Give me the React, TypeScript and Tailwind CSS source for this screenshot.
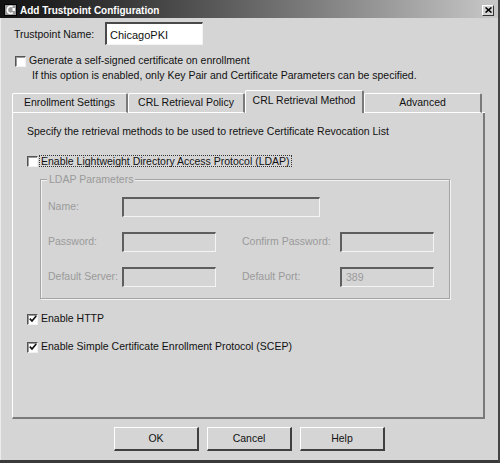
import React from "react";

function Check({ checked }: { checked?: boolean }) {
  return (
    <span className="flex h-[11px] w-[11px] shrink-0 items-center justify-center border border-t-[#555] border-l-[#555] border-r-[#f2f2f2] border-b-[#f2f2f2] bg-white shadow-[inset_1px_1px_0_#9a9a9a]">
      {checked && (
        <svg width="8" height="8" viewBox="0 0 8 8">
          <path d="M0.8 3.6 L3 6 L7.2 1" stroke="#111" strokeWidth="1.7" fill="none" />
        </svg>
      )}
    </span>
  );
}

function Field({ w, value }: { w: string; value?: string }) {
  return (
    <div
      className={`${w} flex h-[20px] items-center border-t-2 border-l-2 border-b border-r border-t-[#5e5e5e] border-l-[#5e5e5e] border-b-[#f4f4f4] border-r-[#f4f4f4] bg-[#d5d5d5] px-[4px] text-[10.5px] text-[#9a9a9a]`}
    >
      {value}
    </div>
  );
}

function Tab({ label, w, active }: { label: string; w: string; active?: boolean }) {
  return (
    <div
      className={`${w} flex items-center justify-center rounded-t-[2px] border-t border-l border-r-2 border-t-white border-l-white border-r-[#7a7a7a] ${
        active ? "h-[23px] pb-[3px]" : "h-[20px] border-b border-b-white"
      }`}
    >
      {label}
    </div>
  );
}

function Button({ label }: { label: string }) {
  return (
    <div className="flex h-[24px] w-[85px] items-center justify-center border border-t-white border-l-white border-r-2 border-b-2 border-r-[#3f3f3f] border-b-[#3f3f3f] text-[10.5px]">
      {label}
    </div>
  );
}

export default function App() {
  return (
    <div className="flex h-[463px] w-[500px] flex-col border-r-2 border-b-[3px] border-r-[#444] border-b-[#3a3a3a] bg-[#d5d5d5] font-['Liberation_Sans',Arial,sans-serif] text-[10.5px] text-[#111]">
      {/* title bar */}
      <div className="flex h-[18px] items-center bg-gradient-to-r from-[#121212] to-[#c8c8c8] pl-[4px] pr-[4px] pt-[2px]">
        <svg width="13" height="12" viewBox="0 0 13 12" className="shrink-0">
          <rect x="0.5" y="0.5" width="12" height="11" fill="#9a9a9a" stroke="#000" />
          <path d="M8.5 3 C7.5 1.8 3.5 1.8 3.3 6 C3.5 10 7.5 10 8.8 8.6" stroke="#fff" strokeWidth="1.6" fill="none" />
          <rect x="8.5" y="4" width="2.5" height="3" fill="#fff" />
        </svg>
        <span className="ml-[3px] text-[10px] font-bold text-white">Add Trustpoint Configuration</span>
        <div className="ml-auto flex h-[11px] w-[12px] items-center justify-center border border-t-white border-l-white border-r-[#333] border-b-[#333] bg-[#d5d5d5]">
          <svg width="7" height="6" viewBox="0 0 7 6">
            <path d="M0.5 0.5 L6.5 5.5 M6.5 0.5 L0.5 5.5" stroke="#000" strokeWidth="1.6" />
          </svg>
        </div>
      </div>

      <div className="flex flex-1 flex-col border-l border-l-[#ececec]">
        {/* trustpoint name */}
        <div className="mt-[4px] flex h-[23px] items-center pl-[13px]">
          <span className="w-[91px] pt-[2px] text-[10.5px]">Trustpoint Name:</span>
          <div className="flex h-[23px] w-[98px] items-start border-t-2 border-l-2 border-b border-r border-t-[#4a4a4a] border-l-[#4a4a4a] border-b-[#f4f4f4] border-r-[#f4f4f4] bg-white pl-[3px] pt-[3px] text-[11px]">
            ChicagoPKI
          </div>
        </div>

        {/* self-signed */}
        <div className="mt-[10px] flex h-[12px] items-center pl-[14px]">
          <Check />
          <span className="ml-[3px]">Generate a self-signed certificate on enrollment</span>
        </div>
        <div className="mt-[3px] flex h-[12px] items-center pl-[31px]">
          If this option is enabled, only Key Pair and Certificate Parameters can be specified.
        </div>

        {/* tabs */}
        <div className="ml-[11px] mt-[8px] flex h-[23px] w-[473px] items-end">
          <Tab label="Enrollment Settings" w="w-[116px]" />
          <Tab label="CRL Retrieval Policy" w="w-[117px]" />
          <Tab label="CRL Retrieval Method" w="w-[119px]" active />
          <Tab label="Advanced" w="w-[118px]" />
          <div className="h-[1px] flex-1 bg-white" />
        </div>

        {/* panel */}
        <div className="ml-[11px] flex h-[306px] w-[473px] flex-col border-l border-r-2 border-b-2 border-l-white border-r-[#7a7a7a] border-b-[#7a7a7a] pl-[14px] pt-[13px]">
          <div className="flex h-[12px] items-center">
            Specify the retrieval methods to be used to retrieve Certificate Revocation List
          </div>

          <div className="mt-[17px] flex h-[12px] items-center">
            <Check />
            <span className="ml-[1px] border border-dotted border-[#333] px-[1px] leading-[10px]">
              Enable Lightweight Directory Access Protocol (LDAP)
            </span>
          </div>

          {/* LDAP group */}
          <div className="relative ml-[13px] mt-[12px] w-[410px] border border-[#a4a4a4] pb-[11px] pl-[7px] pt-[17px] shadow-[inset_1px_1px_0_#f2f2f2,1px_1px_0_#f2f2f2] text-[#9a9a9a]">
            <span className="absolute -top-[7px] left-[6px] bg-[#d5d5d5] px-[2px] leading-[12px]">LDAP Parameters</span>
            <div className="flex h-[20px] items-center">
              <span className="w-[74px]">Name:</span>
              <Field w="w-[198px]" />
            </div>
            <div className="mt-[15px] flex h-[20px] items-center">
              <span className="w-[74px]">Password:</span>
              <Field w="w-[94px]" />
              <span className="ml-[26px] w-[98px]">Confirm Password:</span>
              <Field w="w-[94px]" />
            </div>
            <div className="mt-[15px] flex h-[20px] items-center">
              <span className="w-[74px]">Default Server:</span>
              <Field w="w-[94px]" />
              <span className="ml-[26px] w-[98px]">Default Port:</span>
              <Field w="w-[94px]" value="389" />
            </div>
          </div>

          <div className="mt-[14px] flex h-[12px] items-center">
            <Check checked />
            <span className="ml-[3px]">Enable HTTP</span>
          </div>
          <div className="mt-[16px] flex h-[12px] items-center">
            <Check checked />
            <span className="ml-[3px]">Enable Simple Certificate Enrollment Protocol (SCEP)</span>
          </div>
        </div>

        {/* buttons */}
        <div className="ml-[113px] mt-[8px] flex gap-2">
          <Button label="OK" />
          <Button label="Cancel" />
          <Button label="Help" />
        </div>
      </div>
    </div>
  );
}
